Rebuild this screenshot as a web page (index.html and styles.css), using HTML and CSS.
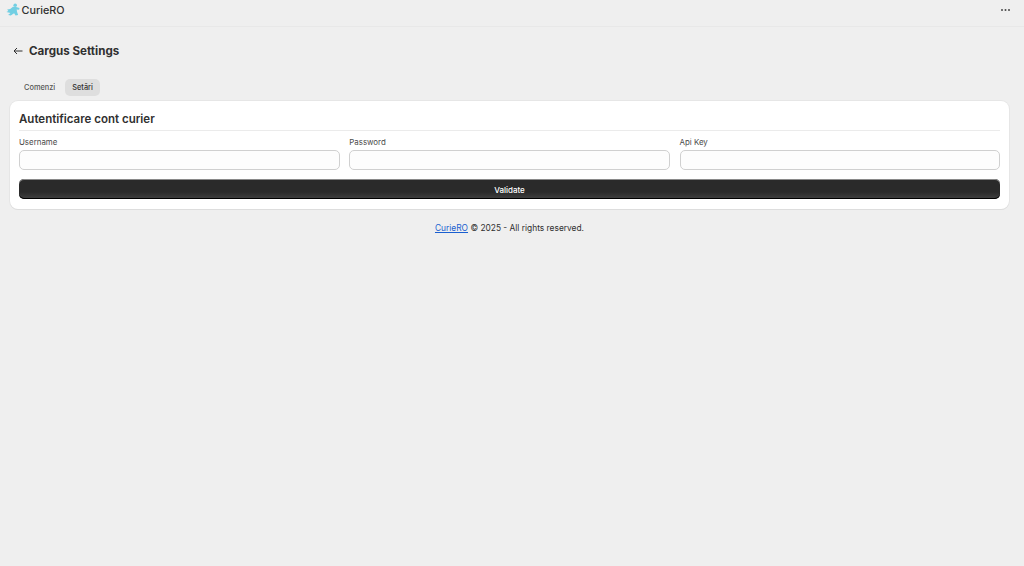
FILE: index.html
```html
<!DOCTYPE html>
<html lang="en">
<head>
  <meta charset="UTF-8">
  <meta name="viewport" content="width=device-width, initial-scale=1.0">
  <title>Cargus Settings</title>
  <link rel="stylesheet" href="styles.css">
</head>
<body>
  <header class="topbar">
    <div class="brand">
      <svg class="brand-logo" viewBox="0 0 14 14" width="14" height="14">
        <circle cx="9.200" cy="2.200" r="1.800" fill="#72cfe3"/>
        <path fill="#72cfe3" d="M7 3.800l3.200.3 3.300 1-.4 1.600-2.400-.3.300 2.300 1.100 3.300-2.500.6-1.500-2.300-3.300 2.300-2.700-.5 2.400-2.100L.4 9l1.900-1.100L1.200 6.500l3-.4z"/>
      </svg>
      <span class="brand-name">CurieRO</span>
    </div>
    <svg class="more" viewBox="0 0 9 2" width="9" height="2">
      <circle cx="1" cy="1" r="1"/>
      <circle cx="4.500" cy="1" r="1"/>
      <circle cx="8" cy="1" r="1"/>
    </svg>
  </header>

  <main class="page">
    <div class="page-head">
      <svg class="back" viewBox="0 0 10 8" width="10" height="8">
        <path d="M9.500 4H1M4 1L1 4l3 3" fill="none" stroke="#303030" stroke-width="1"/>
      </svg>
      <h1>Cargus Settings</h1>
    </div>

    <nav class="tabs">
      <span class="tab">Comenzi</span>
      <span class="tab active">Setări</span>
    </nav>

    <section class="card">
      <h2>Autentificare cont curier</h2>
      <div class="fields">
        <label class="field">Username<input type="text"></label>
        <label class="field">Password<input type="text"></label>
        <label class="field">Api Key<input type="text"></label>
      </div>
      <button class="validate">Validate</button>
    </section>

    <footer class="credits"><a href="#">CurieRO</a> © 2025 - All rights reserved.</footer>
  </main>
</body>
</html>
```

FILE: styles.css
```css
body {
  margin: 0;
  padding: 0;
  font-family: Inter, "Liberation Sans", sans-serif;
  background-color: #efefef;
  color: #303030;
}

.topbar {
  display: flex;
  justify-content: space-between;
  align-items: center;
  height: 26px;
  padding: 0 14px 0 6px;
  border-bottom: 1px solid #e8e8e8;
}

.brand {
  display: flex;
  align-items: center;
  gap: 1.500px;
  margin-top: -6px;
}

.brand-name {
  font-size: 10.800px;
  font-weight: 500;
  color: #303030;
}

.more {
  fill: #4a4a4a;
  margin-top: -6px;
}

.page {
  padding: 0 15px 0 10px;
}

.page-head {
  display: flex;
  align-items: center;
  gap: 6px;
  height: 47px;
  padding-left: 3px;
}

h1 {
  margin: 0;
  font-size: 11.600px;
  font-weight: 650;
  color: #303030;
}

.tabs {
  display: flex;
  gap: 2.500px;
  height: 17px;
  padding-left: 7px;
  margin-top: 5px;
  margin-bottom: 5px;
}

.tab {
  display: flex;
  align-items: center;
  padding: 0 7.500px 0 7px;
  font-size: 7.400px;
  font-weight: 500;
  color: #555555;
  border-radius: 5px;
}

.tab.active {
  background-color: #dedede;
  color: #303030;
}

.card {
  background-color: #ffffff;
  border-radius: 8px;
  box-shadow: 0 1px 0 #dddddd, 0 0 0 1px #e6e6e6;
  padding: 9px;
  height: 90px;
}

h2 {
  margin: 0 0 6px;
  padding-top: 1.500px;
  padding-bottom: 3.500px;
  font-size: 11.500px;
  line-height: 15px;
  font-weight: 600;
  color: #303030;
  border-bottom: 1px solid #ebebeb;
}

.fields {
  display: grid;
  grid-template-columns: repeat(3, 1fr);
  gap: 9.750px;
}

.field {
  display: flex;
  flex-direction: column;
  gap: 3px;
  font-size: 7.900px;
  line-height: 10px;
  color: #4a4a4a;
}

.field input {
  height: 20px;
  box-sizing: border-box;
  border: 1px solid #d0d0d0;
  border-radius: 5px;
  background-color: #fdfdfd;
  padding: 0 6px;
  width: 100%;
}

.validate {
  display: block;
  width: 100%;
  height: 20px;
  margin-top: 9px;
  padding-top: 2px;
  border: 0;
  border-radius: 5px;
  background: linear-gradient(#2a2a2a 65%, #404040);
  box-shadow: inset 0 1px 0 #8a8a8a, inset 0 -1px 0 #000000;
  color: #ffffff;
  font-family: inherit;
  font-size: 8px;
  font-weight: 500;
}

.credits {
  margin-top: 14px;
  text-align: center;
  font-size: 8.400px;
  line-height: 10px;
  color: #303030;
}

.credits a {
  color: #1a5fd0;
}
```
